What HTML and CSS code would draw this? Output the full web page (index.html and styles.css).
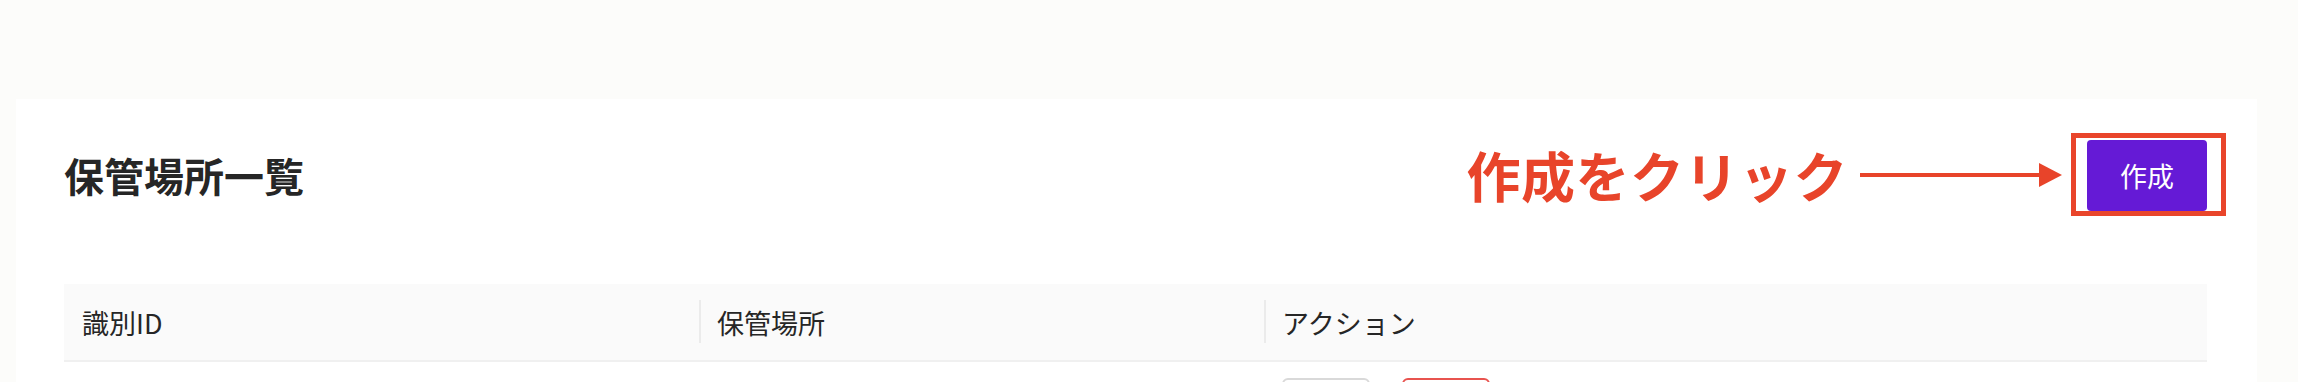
FILE: index.html
```html
<!DOCTYPE html>
<html lang="ja">
<head>
<meta charset="utf-8">
<title>保管場所一覧</title>
<link rel="stylesheet" href="styles.css">
</head>
<body>
<div class="page">
  <section class="card">
    <div class="card-head">
      <h1 class="title">保管場所一覧</h1>
      <div class="cta">
        <span class="annot">作成をクリック</span>
        <svg class="arrow" width="202" height="24" viewBox="0 0 202 24">
          <rect x="0" y="10" width="182" height="4" fill="#e8442a"/>
          <polygon points="179,0 202,12 179,24" fill="#e8442a"/>
        </svg>
        <div class="highlight">
          <button class="btn-primary">作成</button>
        </div>
      </div>
    </div>
    <table class="table">
      <colgroup>
        <col class="c1">
        <col class="c2">
        <col class="c3">
      </colgroup>
      <thead>
        <tr>
          <th>識別ID</th>
          <th class="sep">保管場所</th>
          <th class="sep">アクション</th>
        </tr>
      </thead>
      <tbody>
        <tr>
          <td></td>
          <td></td>
          <td>
            <div class="actions">
              <button class="btn-default" aria-label="編集"></button>
              <button class="btn-danger" aria-label="削除"></button>
            </div>
          </td>
        </tr>
      </tbody>
    </table>
  </section>
</div>
</body>
</html>
```

FILE: styles.css
```css
html, body {
  margin: 0;
  padding: 0;
  background: #fcfcfa;
  font-family: "Noto Sans CJK JP", "Noto Sans", sans-serif;
  color: #262626;
}

.page {
  padding: 99px 41px 0 16px;
}

.card {
  background: #ffffff;
  padding: 34px 50px 40px 48px;
}

.card-head {
  display: flex;
  align-items: center;
  justify-content: space-between;
  height: 83px;
}

.title {
  margin: 0;
  font-size: 40px;
  font-weight: 700;
  line-height: 48px;
  color: #262626;
}

.cta {
  display: flex;
  align-items: center;
}

.annot {
  font-size: 54px;
  font-weight: 700;
  line-height: 60px;
  color: #e8442a;
  letter-spacing: 0.5px;
}

.arrow {
  display: block;
  margin-left: 12px;
  margin-right: 9px;
}

.highlight {
  border: 5px solid #e9452b;
  padding: 2px 14px 0 11px;
  margin-right: -19px;
  display: flex;
}

.btn-primary {
  width: 120px;
  height: 71px;
  border: none;
  border-radius: 4px;
  background: #651ad6;
  color: #ffffff;
  font-family: "Noto Sans CJK JP", "Noto Sans", sans-serif;
  font-size: 27px;
  padding: 0;
  cursor: pointer;
}

.table {
  margin-top: 68px;
  width: 100%;
  border-collapse: collapse;
  table-layout: fixed;
}

.c1 { width: 635px; }
.c2 { width: 565px; }
.c3 { width: auto; }

.table th {
  position: relative;
  height: 76px;
  padding: 0 18px;
  background: #fafafa;
  border-bottom: 2px solid #f0f0f0;
  text-align: left;
  font-size: 27px;
  font-weight: 400;
  color: #262626;
}

.table th.sep::before {
  content: "";
  position: absolute;
  left: 0;
  top: 16px;
  width: 2px;
  height: 43px;
  background: #ebebeb;
}

.table td {
  padding: 16px 18px;
  vertical-align: top;
}

.actions {
  display: flex;
  gap: 32px;
}

.btn-default,
.btn-danger {
  width: 88px;
  height: 48px;
  border-radius: 6px;
  background: #ffffff;
  padding: 0;
}

.btn-default {
  border: 2px solid #d9d9d9;
}

.btn-danger {
  border: 2px solid #e8534f;
}
```
